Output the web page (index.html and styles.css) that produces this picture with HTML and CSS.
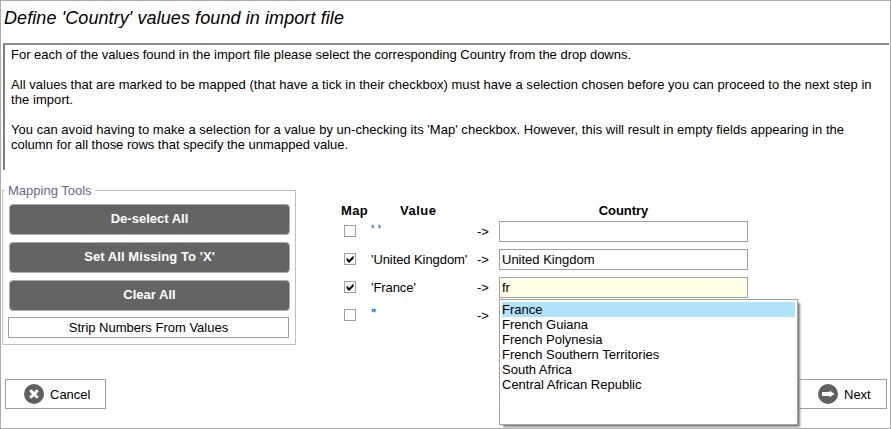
FILE: index.html
```html
<!DOCTYPE html>
<html lang="en">
<head>
<meta charset="utf-8">
<title>Define 'Country' values found in import file</title>
<link rel="stylesheet" href="styles.css">
</head>
<body>
<main class="window">
  <h1 class="title">Define 'Country' values found in import file</h1>
  <section class="help">
    <p><span class="l1">For each of the values found in the import file please select the corresponding Country from the drop downs.</span></p>
    <p><span class="l2">All values that are marked to be mapped (that have a tick in their checkbox) must have a selection chosen before you can proceed to the next step in</span><br><span class="l3">the import.</span></p>
    <p><span class="l4">You can avoid having to make a selection for a value by un-checking its 'Map' checkbox. However, this will result in empty fields appearing in the</span><br><span class="l5">column for all those rows that specify the unmapped value.</span></p>
  </section>
  <div class="workspace">
    <section class="tools">
      <h2 class="legend">Mapping Tools</h2>
      <button class="tool">De-select All</button>
      <button class="tool missing">Set All Missing To 'X'</button>
      <button class="tool">Clear All</button>
      <button class="strip">Strip Numbers From Values</button>
    </section>
    <section class="mapping">
      <div class="row head"><span class="h-map">Map</span><span class="h-value">Value</span><span></span><span class="h-country">Country</span></div>
      <div class="row"><span class="check"></span><span class="value empty">' '</span><span class="arrow">-&gt;</span><div class="field"></div></div>
      <div class="row"><span class="check"><svg viewBox="0 0 10 10"><path d="M1.6 3.6 4.1 5.9 8.6 1.4V4.4L4.1 8.9 1.6 6.6Z"/></svg></span><span class="value">'United Kingdom'</span><span class="arrow">-&gt;</span><div class="field">United Kingdom</div></div>
      <div class="row"><span class="check"><svg viewBox="0 0 10 10"><path d="M1.6 3.6 4.1 5.9 8.6 1.4V4.4L4.1 8.9 1.6 6.6Z"/></svg></span><span class="value">'France'</span><span class="arrow">-&gt;</span>
        <div class="field active">fr
          <ul class="menu">
            <li class="selected">France</li>
            <li>French Guiana</li>
            <li>French Polynesia</li>
            <li>French Southern Territories</li>
            <li>South Africa</li>
            <li>Central African Republic</li>
          </ul>
        </div>
      </div>
      <div class="row"><span class="check"></span><span class="value empty tight">''</span><span class="arrow">-&gt;</span><div></div></div>
    </section>
  </div>
  <footer class="actions">
    <button class="nav cancel"><svg class="icon" viewBox="0 0 20 20"><circle cx="10" cy="10" r="10"/><path class="cross" d="M6.2 6.2l7.6 7.6M13.8 6.2l-7.6 7.6"/></svg>Cancel</button>
    <button class="nav next"><svg class="icon" viewBox="0 0 20 20"><circle cx="10" cy="10" r="10"/><path class="arrow-shape" d="M4 8h7.5V6.5l5 3.5-5 3.5V12H4z"/></svg>Next</button>
  </footer>
</main>
</body>
</html>
```
FILE: styles.css
```css
* { box-sizing: border-box; }
body { margin: 0; font: 13px/15px "Liberation Sans", Arial, sans-serif; color: #000; background: #fff; }
button { font: inherit; padding: 0; margin: 0; color: inherit; }
.window { height: 429px; border: 1px solid #ababab; overflow: hidden; }
.title { margin: 0; padding: 6px 0 0 3px; height: 42px; font-size: 18px; line-height: 22px; font-weight: 400; font-style: italic; letter-spacing: .09px; white-space: nowrap; }
.help { margin: 0 1px 0 2px; height: 127px; padding: 2px 0 0 6px; border: 2px solid #808080; border-width: 2px 0 0 2px; border-top-color: #8a8a8a; white-space: nowrap; }
.help p { margin: 0 0 15px; }
.l1 { letter-spacing: -.02px; }
.l2 { letter-spacing: .034px; }
.l3 { letter-spacing: .07px; }
.l4 { letter-spacing: .028px; }
.l5 { letter-spacing: -.02px; }
.workspace { display: flex; height: 209px; padding: 20px 0 0 1px; }
.tools { width: 294px; height: 155px; border: 1px solid #bfbfbf; padding: 0 6px 0 5px; }
.legend { width: max-content; margin: -8px 0 6px -3px; padding: 0 3px; background: #fff; font-size: 13px; line-height: 15px; font-weight: 400; color: #6a6698; }
.tool { display: block; width: 281px; height: 31px; margin: 0 0 7px 1px; padding-bottom: 2px; border: 1px solid #ababab; border-radius: 4px; background: #646464; color: #fff; font-weight: 700; }
.missing { letter-spacing: .08px; }
.strip { display: block; width: 281px; height: 21px; margin-top: -1px; border: 1px solid #a0a0a0; background: #fff; }
.mapping { margin-left: 46px; padding-top: 13px; white-space: nowrap; }
.row { display: grid; grid-template-columns: 29px 106px 22px 249px; height: 28px; align-items: center; }
.row.head { height: 14px; font-weight: 700; align-items: start; letter-spacing: -.05px; }
.h-map { margin-left: -1px; letter-spacing: .4px; }
.h-value { margin-left: 29px; letter-spacing: .5px; }
.h-country { text-align: center; }
.check { width: 12px; height: 12px; margin-left: 2px; border: 1px solid #a0a0a0; }
.check svg { display: block; width: 10px; height: 10px; }
.value { letter-spacing: -.08px; }
.empty { color: #1878d0; font-weight: 700; letter-spacing: 0; margin-top: -3px; }
.tight { letter-spacing: -1px; }
.field { position: relative; height: 21px; padding: 2px 2px; border: 1px solid #a0a0a0; }
.field.active { background: #ffffe6; }
.menu { position: absolute; z-index: 2; left: -1px; top: 21px; width: 299px; height: 126px; margin: 0; padding: 2px; list-style: none; background: #fff; border: 1px solid #a0a0a0; box-shadow: 3px 3px 2px -1px #808080; }
.menu .selected { background: #b0e2fa; }
.actions { display: flex; justify-content: space-between; padding: 0 3px 0 4px; }
.nav { display: flex; align-items: center; height: 30px; border: 1px solid #a0a0a0; background: #fff; }
.cancel { width: 101px; padding-left: 18px; gap: 6px; }
.next { width: 89px; padding-left: 19px; gap: 6px; }
.icon { width: 20px; height: 20px; fill: #606060; }
.cross { stroke: #fff; stroke-width: 3; }
.arrow-shape { fill: #fff; }
```
